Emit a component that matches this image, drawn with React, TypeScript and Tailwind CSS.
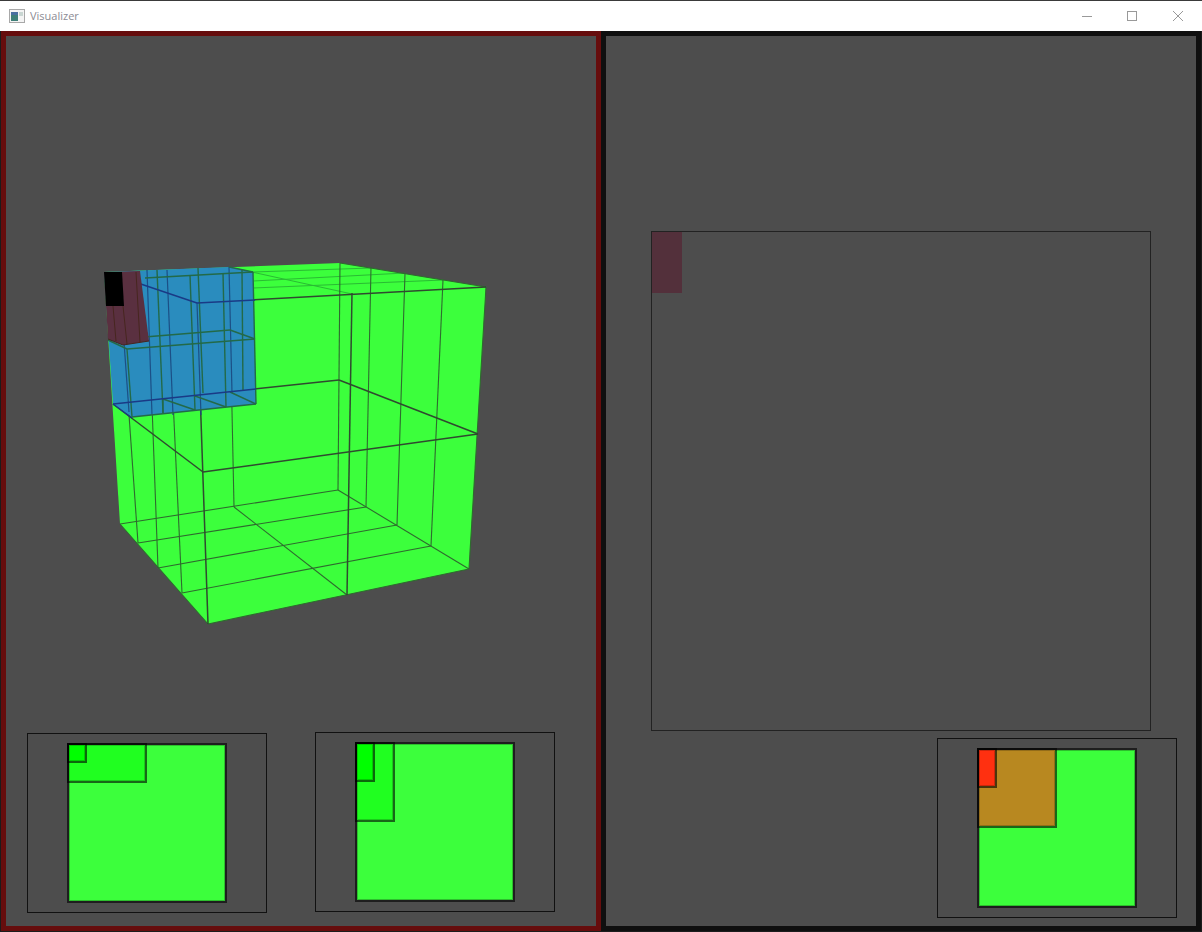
import React from "react";

type Seg = [number, number, number, number];

// heavy edges of the cube
const heavy: Seg[] = [
  [113, 404, 203, 472],
  [203, 472, 478, 434],
  [478, 434, 339, 380],
  [113, 404, 339, 380],
  [197, 303, 486, 287],
  [197, 303, 208, 624],
  [352, 293, 347, 595],
];

// thin grid lines
const thin: Seg[] = [
  [340, 263, 338, 490],
  [229, 267, 234, 507],
  [120, 524, 338, 490],
  [138, 543, 366, 507],
  [158, 568, 397, 525],
  [182, 593, 431, 546],
  [234, 507, 347, 595],
  [338, 490, 469, 569],
  [371, 267, 366, 507],
  [405, 273, 397, 525],
  [443, 280, 431, 546],
  [119, 272, 138, 543],
  [147, 270, 158, 568],
  [167, 270, 182, 593],
  [120, 524, 208, 624],
  [208, 624, 469, 569],
  [469, 569, 486, 287],
  [486, 287, 340, 263],
];

const faint: Seg[] = [
  [229, 267, 352, 294],
  [253, 272, 371, 268],
  [253, 281, 405, 273],
  [253, 288, 443, 280],
];

const blueLines: Seg[] = [
  [145, 278, 253, 272],
  [108, 340, 127, 349],
  [127, 349, 255, 339],
  [255, 339, 230, 330],
  [230, 330, 108, 340],
  [132, 417, 256, 404],
  [230, 392, 256, 404],
  [253, 272, 256, 404],
  [229, 267, 253, 272],
  [127, 349, 132, 417],
  [157, 270, 163, 413],
  [190, 275, 195, 410],
  [198, 268, 203, 393],
  [223, 273, 226, 407],
  [242, 270, 243, 391],
  [163, 399, 163, 413],
  [163, 399, 195, 410],
  [195, 396, 226, 407],
];

const blueDark: Seg[] = [
  [119, 272, 129, 412],
  [147, 270, 152, 415],
  [167, 270, 173, 415],
  [229, 267, 232, 393],
  [197, 303, 201, 415],
];

const blueEdge: Seg[] = [
  [123, 278, 197, 303],
  [197, 303, 255, 300],
  [113, 404, 256, 389],
  [113, 404, 132, 418],
];

function Lines({ segs, className }: { segs: Seg[]; className: string }) {
  return (
    <g className={className}>
      {segs.map((s, i) => (
        <line key={i} x1={s[0]} y1={s[1]} x2={s[2]} y2={s[3]} />
      ))}
    </g>
  );
}

function Cube() {
  return (
    <svg viewBox="6 36 590 696" className="block w-[590px] h-[696px]">
      <polygon points="104,272 340,263 486,287 469,569 208,624 120,524" fill="#3cff3c" />
      <Lines segs={faint} className="stroke-[#1f8f2f] stroke-[1] opacity-60" />
      <Lines segs={thin} className="stroke-[#2f6a2f] stroke-[1.1]" />
      <Lines segs={heavy} className="stroke-[#304a30] stroke-[1.5]" />
      <polygon points="104,272 229,267 253,272 256,404 132,417 113,404" fill="#2a8cbe" />
      <Lines segs={blueDark} className="stroke-[#1c4f86] stroke-[1.2]" />
      <Lines segs={blueLines} className="stroke-[#236a48] stroke-[1.4]" />
      <Lines segs={blueEdge} className="stroke-[#1a3a86] stroke-[1.4]" />
      <polygon points="104,272 140,271 149,341 123,345 108,339" fill="#5a3040" />
      <polygon points="104,272 122,272 124,306 106,306" fill="#000000" />
      <Lines
        segs={[
          [136, 272, 140, 342],
          [123, 306, 127, 344],
          [113, 306, 116, 341],
          [108, 339, 123, 345],
          [123, 345, 149, 341],
        ]}
        className="stroke-[#47261f] stroke-[1]"
      />
    </svg>
  );
}

function Mini({
  outer,
  mid,
  inner,
  midClass,
  innerClass,
  className,
}: {
  outer: string;
  mid: string;
  inner: string;
  midClass: string;
  innerClass: string;
  className: string;
}) {
  return (
    <div className={`w-[240px] h-[180px] border border-[#111111] pl-[39px] pt-[9px] shrink-0 ${className}`}>
      <div className={`w-[160px] h-[160px] border-2 border-black/60 bg-clip-padding shadow-[inset_0_0_0_1px_rgba(0,0,0,0.25)] ${outer}`}>
        <div className={`-m-0.5 border-2 border-black/60 bg-clip-padding shadow-[inset_0_0_0_1px_rgba(0,0,0,0.2)] ${midClass} ${mid}`}>
          <div className={`-m-0.5 border-2 border-black/60 bg-clip-padding shadow-[inset_0_0_0_1px_rgba(0,0,0,0.2)] ${innerClass} ${inner}`} />
        </div>
      </div>
    </div>
  );
}

export default function App() {
  return (
    <div className="w-[1202px] h-[932px] overflow-hidden bg-[#1c1c1c] font-['Open_Sans',sans-serif]">
      <div className="h-[31px] bg-white border-t border-[#3a3a3a] flex items-center pl-[9px]">
        <svg width="16" height="14" viewBox="0 0 16 14" className="mr-[5px]">
          <rect x="0.5" y="0.5" width="15" height="13" fill="#f4f4f4" stroke="#a8a8a8" />
          <rect x="2" y="3" width="7" height="9" fill="#3f7f78" />
          <rect x="2" y="3" width="7" height="3" fill="#4a6fa0" />
          <rect x="10" y="3" width="4" height="4" fill="#c9d6d2" />
        </svg>
        <span className="text-[11px] text-[#8c8c94]">Visualizer</span>
        <div className="ml-auto flex items-center mr-[19px]">
          <svg width="10" height="10" viewBox="0 0 10 10" className="mr-[35px]">
            <path d="M0 5.5H10" stroke="#999" />
          </svg>
          <svg width="10" height="10" viewBox="0 0 10 10" className="mr-[36px]">
            <rect x="0.5" y="0.5" width="9" height="9" fill="none" stroke="#999" />
          </svg>
          <svg width="10" height="10" viewBox="0 0 10 10">
            <path d="M0 0L10 10M10 0L0 10" stroke="#999" />
          </svg>
        </div>
      </div>
      <div className="flex pl-px">
        <div className="w-[600px] h-[900px] border-[5px] border-[#660d0d] bg-[#4d4d4d]">
          <Cube />
          <div className="flex items-start pl-[21px] gap-[48px]">
            <Mini
              className="mt-px"
              outer="bg-[#3cff3c]"
              mid="bg-[#20ff20]"
              inner="bg-[#00ff00]"
              midClass="w-[80px] h-[40px]"
              innerClass="w-[20px] h-[20px]"
            />
            <Mini
              className=""
              outer="bg-[#3cff3c]"
              mid="bg-[#20ff20]"
              inner="bg-[#00ff00]"
              midClass="w-[40px] h-[80px]"
              innerClass="w-[20px] h-[40px]"
            />
          </div>
        </div>
        <div className="w-[600px] h-[900px] border-[5px] border-[#0f0f0f] bg-[#4d4d4d] flex flex-col">
          <div className="w-[500px] h-[500px] border border-[#222222] mt-[195px] ml-[45px]">
            <div className="w-[30px] h-[61px] bg-[#53303b]" />
          </div>
          <Mini
            className="mt-[7px] ml-[331px]"
            outer="bg-[#3cff3c]"
            mid="bg-[#b88820]"
            inner="bg-[#ff3010]"
            midClass="w-[80px] h-[80px]"
            innerClass="w-[20px] h-[40px]"
          />
        </div>
      </div>
    </div>
  );
}
